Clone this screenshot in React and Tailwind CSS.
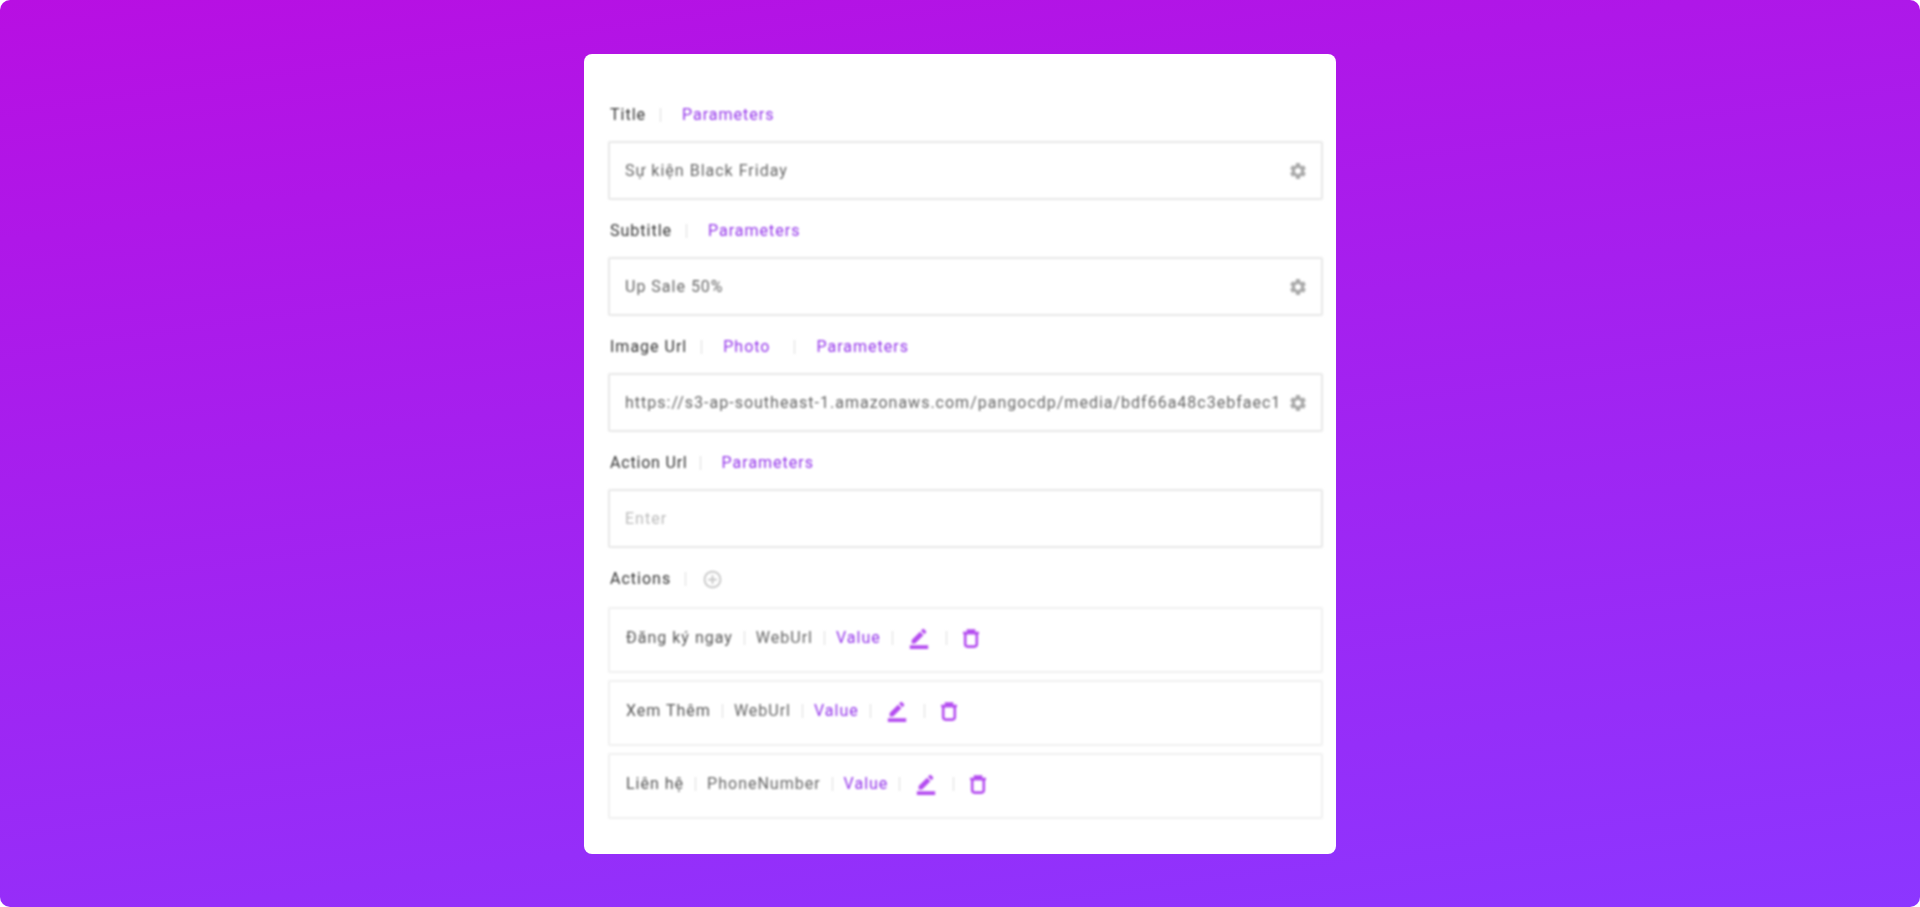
import React from "react";
import { MdBorderColor, MdSettings, MdAddCircleOutline } from "react-icons/md";

const fields = [
  { label: "Title", links: [{ text: "Parameters" }], value: "Sự kiện Black Friday" },
  { label: "Subtitle", links: [{ text: "Parameters" }], value: "Up Sale 50%" },
  {
    label: "Image Url",
    links: [{ text: "Photo", cn: "mr-[10px]" }, { text: "Parameters" }],
    value: "https://s3-ap-southeast-1.amazonaws.com/pangocdp/media/bdf66a48c3ebfaec1",
  },
  {
    label: "Action Url",
    labelCn: "tracking-[0.8px] -mr-[2px]",
    links: [{ text: "Parameters", cn: "-ml-[2px]" }],
    placeholder: "Enter",
  },
];

const actions = [
  { name: "Đăng ký ngay", type: "WebUrl" },
  { name: "Xem Thêm", type: "WebUrl" },
  { name: "Liên hệ", type: "PhoneNumber" },
];

function Divider() {
  return <span className="h-[14px] w-px bg-[#dddddd] shrink-0" />;
}

function TrashIcon() {
  return (
    <svg width="18" height="19" viewBox="0 0 18 19" fill="none" stroke="#b44cf0" strokeWidth="2.6" className="ml-[4px] shrink-0">
      <path d="M1 4h16M6 4V1.5h6V4" />
      <rect x="3.2" y="4" width="11.6" height="13.6" rx="2.5" />
    </svg>
  );
}

function Field({ label, labelCn = "", links, value, placeholder }) {
  return (
    <div className="mb-[19px]">
      <div className="h-[24px] mb-[14px] pl-[2px] flex items-center gap-[14px]">
        <span className={`text-[#333333] ${labelCn}`}>{label}</span>
        {links.map((link) => (
          <React.Fragment key={link.text}>
            <Divider />
            <span className={`text-[#9333ea] ml-[7px] ${link.cn || ""}`}>{link.text}</span>
          </React.Fragment>
        ))}
      </div>
      <div className="h-[59px] border-2 border-[#e8e8e8] rounded-[2px] pl-[15px] pr-[13px] flex items-center gap-[6px]">
        <span className={`flex-1 min-w-0 overflow-hidden whitespace-nowrap ${value ? "text-[#666666]" : "text-[#bbbbbb]"}`}>
          {value || placeholder}
        </span>
        {value && <MdSettings className="text-[#aaaaaa] text-[20px] shrink-0" />}
      </div>
    </div>
  );
}

function ActionRow({ name, type }) {
  return (
    <div className="h-[66px] border-2 border-[#f0f0f0] rounded-[2px] pl-[16px] pb-[4px] flex items-center gap-[11px]">
      <span className="text-[#555555]">{name}</span>
      <Divider />
      <span className="text-[#666666]">{type}</span>
      <Divider />
      <span className="text-[#9333ea]">Value</span>
      <Divider />
      <MdBorderColor className="text-[#b44cf0] text-[22px] ml-[4px]" />
      <span className="ml-[5px] flex items-center"><Divider /></span>
      <TrashIcon />
    </div>
  );
}

export default function App() {
  return (
    <div className="bg-white">
      <div className="h-[907px] rounded-[10px] bg-[linear-gradient(172deg,#b80fe2,#8c36ff)] flex justify-center pt-[54px] font-['Roboto',sans-serif] text-[16px] tracking-[1px]">
        <div className="w-[752px] h-[800px] bg-white rounded-[8px] pt-[49px] pl-[24px] pr-[13px]">
          <div className="blur-[1px]">
            {fields.map((f) => (
              <Field key={f.label} {...f} />
            ))}
            <div className="h-[24px] mb-[16px] pl-[2px] flex items-center gap-[14px]">
              <span className="text-[#333333]">Actions</span>
              <Divider />
              <MdAddCircleOutline className="text-[#c4c4c4] text-[21px] ml-[2px]" />
            </div>
            <div className="flex flex-col gap-[7px]">
              {actions.map((a) => (
                <ActionRow key={a.name} {...a} />
              ))}
            </div>
          </div>
        </div>
      </div>
    </div>
  );
}
